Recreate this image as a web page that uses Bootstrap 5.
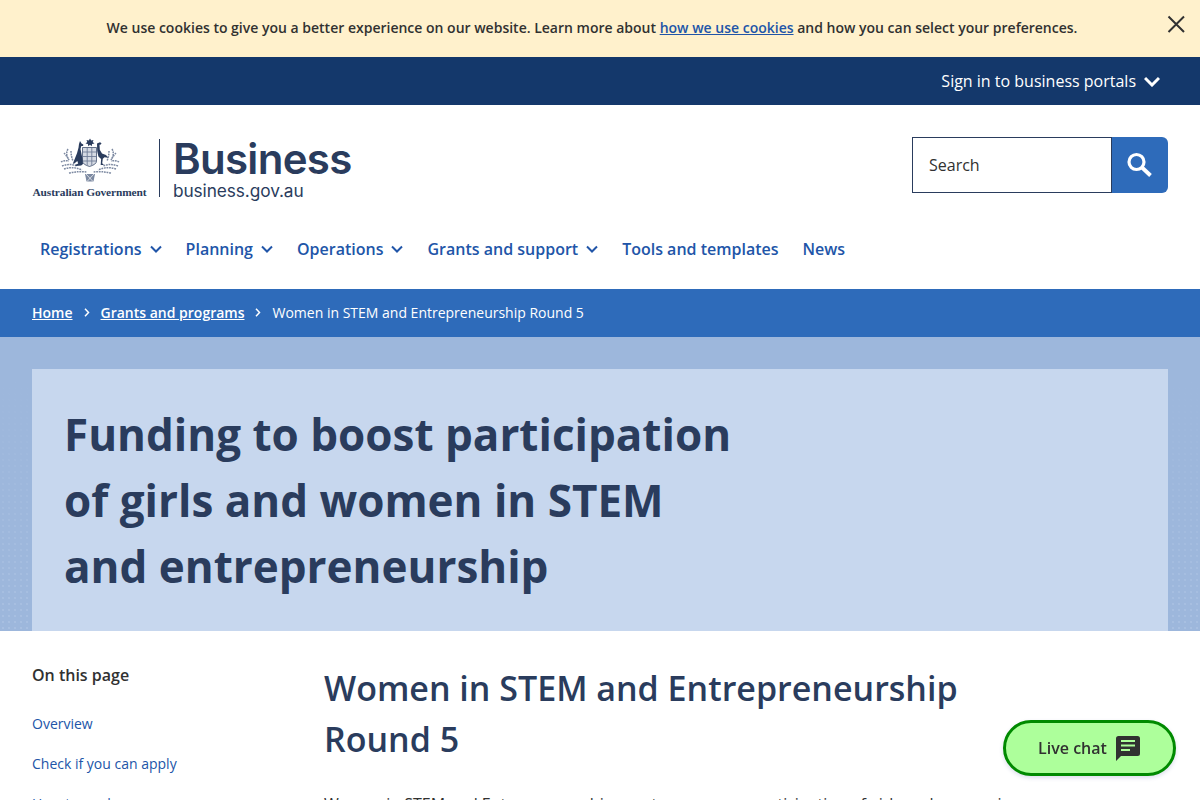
<!DOCTYPE html>
<html lang="en">
<head>
<meta charset="utf-8">
<title>Women in STEM and Entrepreneurship Round 5</title>
<link href="https://cdn.jsdelivr.net/npm/bootstrap@5.3.0/dist/css/bootstrap.min.css" rel="stylesheet">
<style>
html,body{height:800px;overflow:hidden}
body{font-family:"Open Sans",sans-serif;color:#313131;font-size:16px;background:#fff}
a{color:#2155a8}
.cookie-bar{height:57px;background:#fff1cc;font-size:14px;font-weight:600;color:#313131;position:relative;padding:0 16px 2px 0}
.cookie-bar a{color:#2155a8;font-weight:600}
.cookie-close{position:absolute;right:14px;top:14px;width:20px;height:20px;line-height:0}
.portal-bar{height:48px;background:#14386b;color:#fff;padding-right:40px}
.portal-bar span{margin-right:8px}
.head-row{padding:32px 32px 0;height:112px}
.logo-box{width:321px;height:62px;margin-top:2px}
.crest-col{width:115px;margin-top:-1px}
.gov-name{font-family:"Liberation Serif",serif;font-weight:700;font-size:11.4px;line-height:13px;color:#2a3c5d;white-space:nowrap;letter-spacing:-.1px;margin-bottom:2px}
.logo-rule{width:1px;height:58px;background:#2a3c5d;margin:0 13px 0 12px}
.brand-big{font-family:Inter,sans-serif;font-weight:600;font-size:42px;line-height:40px;letter-spacing:-.7px;color:#2a3c5d}
.brand-small{font-family:Inter,sans-serif;font-size:17.300px;line-height:22px;color:#2a3c5d;letter-spacing:-.1px;padding-top:1px}
.search-input{width:200px;height:56px;border:1px solid #2a3c5d;padding:0 16px;line-height:54px;color:#313131}
.search-btn{width:56px;height:56px;background:#2e6bba;border-radius:0 6px 6px 0}
.main-nav{height:72px;padding:0 40px 8px;gap:24px;font-weight:600;color:#2155a8}
.main-nav a{text-decoration:none;color:#2155a8;line-height:24px;white-space:nowrap}
.main-nav svg{margin-left:8px}
.crumb-bar{height:48px;background:#2e6bba;color:#fff;font-size:14px;padding:0 32px 2px}
.crumb-bar a{color:#fff;font-weight:600}
.crumb-bar svg{margin:0 11px}
.hero-band{height:294px;padding:32px 32px 0;background-color:#9db7dc;background-image:linear-gradient(to bottom,#9db7dc 15%,rgba(157,183,220,.35)),radial-gradient(circle,#aec4e4 1px,transparent 1.300px);background-size:100% 100%,6px 6px}
.hero-panel{height:262px;background:#c7d7ee;padding:32px}
.hero-title{font-size:44px;font-weight:700;line-height:66px;color:#2a3c5d;margin:0;max-width:680px}
.page-body{padding:0 32px}
.toc-col{width:292px;flex:none;padding-top:32px}
.toc-head{font-weight:600;line-height:24px;margin-bottom:27px;color:#313131}
.toc-link{display:block;font-size:14px;line-height:20px;margin-bottom:20px;color:#2155a8;text-decoration:none}
.main-col{width:680px;padding-top:32px}
.main-title{font-size:34px;font-weight:600;line-height:51px;color:#2a3c5d;margin:0 0 27px}
.main-copy{font-size:16px;line-height:24px;margin:0;white-space:nowrap}
.chat-btn{position:fixed;left:1003px;top:720px;width:173px;height:56px;background:#adff9b;border:3px solid #008a00;border-radius:28px;color:#313131;font-weight:600;box-shadow:0 2px 4px rgba(80,90,160,.2);gap:8px}
</style>
</head>
<body>
<div class="cookie-bar d-flex align-items-center justify-content-center">
  <div>We use cookies to give you a better experience on our website. Learn more about <a href="#">how we use cookies</a> and how you can select your preferences.</div>
  <div class="cookie-close"><svg width="20" height="20" viewBox="0 0 20 20"><path d="M2.500 2.500l15.500 15.500M18 2.500L2.500 18" stroke="#313131" stroke-width="2" fill="none"/></svg></div>
</div>
<div class="portal-bar d-flex align-items-center justify-content-end">
  <span>Sign in to business portals</span>
  <svg width="16" height="11" viewBox="0 0 16 11"><path d="M1 2l7 7 7-7" stroke="#fff" stroke-width="3" fill="none"/></svg>
</div>
<header>
  <div class="head-row d-flex justify-content-between">
    <div class="logo-box d-flex">
      <div class="crest-col d-flex flex-column align-items-center justify-content-end">
        <svg width="60" height="44" viewBox="0 0 60 44">
          <g stroke="#7c89a1" stroke-width="1.500" fill="none" stroke-dasharray="1.800 .8">
            <path d="M1 24q3-2 8-1M2 28q8-3 15 0M4 31q9-3 18 1M9 35q10-2 18-1"/>
            <path d="M59 24q-3-2-8-1M58 28q-8-3-15 0M56 31q-9-3-18 1M51 35q-10-2-18-1"/>
            <path d="M8 11q-3 5 1 11M4 15q3 3 5 7M11 13q0 5 2 10M52 11q3 5-1 11M56 15q-3 3-5 7M49 13q0 5-2 10"/>
          </g>
          <path d="M30 .5l1.200 2 2.300-.6-.8 2.200 1.800 1.500-2.400.4-.4 2.200-1.700-1.500-1.700 1.500-.4-2.200-2.400-.4 1.800-1.500-.8-2.200 2.300.6z" fill="#2a3c5d"/>
          <path d="M22.500 9.500h14v13.500q0 3.500-7 5.500q-7-2-7-5.500z" fill="#d5dae3" stroke="#2a3c5d" stroke-width=".7"/>
          <path d="M23 14h13M23 18.500h13M23 23h13M27.200 10v17M31.800 10v17" stroke="#6f7d97" stroke-width=".9" fill="none"/>
          <path d="M20 3l1.500 2.500 1.800 1-.2 1.500-1.800 0-.8 3 .8 4 1.200 6 .5 5-1.800 1.500-5 .5-1.200-1 3.200-1.600-.9-2.400-3 2.500-1.500.2 1.800-4.500 2.400-6 1.500-5.500.5-3.800z" fill="#2a3c5d"/>
          <path d="M37 5.500l3-1.200 1.500 1-.7 1.200-1.300.3.300 5 2.200 3.700 4 1.600 2.300 2.600-3.800-.4-1.700 1.500-.6 4.500 1.800 1.800-3.300 0 .4-6-2.700-2.500-1.200-5.500z" fill="#2a3c5d"/>
          <path d="M25 36h10l-1.500 7.500h-7z" fill="#7c89a1"/>
          <path d="M26 36l7 7.500M34 36l-7 7.500" stroke="#fff" stroke-width=".7"/>
        </svg>
        <div class="gov-name mt-1">Australian Government</div>
      </div>
      <div class="logo-rule"></div>
      <div>
        <div class="brand-big">Business</div>
        <div class="brand-small">business.gov.au</div>
      </div>
    </div>
    <div class="d-flex">
      <div class="search-input">Search</div>
      <div class="search-btn d-flex align-items-center justify-content-center">
        <svg width="26" height="26" viewBox="0 0 26 26"><circle cx="9.500" cy="10" r="7.500" stroke="#fff" stroke-width="3.200" fill="none"/><path d="M15 15.500l8.500 8" stroke="#fff" stroke-width="3.800" fill="none"/></svg>
      </div>
    </div>
  </div>
  <nav class="main-nav d-flex align-items-center">
    <a class="d-inline-flex align-items-center" href="#">Registrations<svg width="12" height="8" viewBox="0 0 12 8"><path d="M1 1.500l5 5 5-5" stroke="#2155a8" stroke-width="2" fill="none"/></svg></a>
    <a class="d-inline-flex align-items-center" href="#">Planning<svg width="12" height="8" viewBox="0 0 12 8"><path d="M1 1.500l5 5 5-5" stroke="#2155a8" stroke-width="2" fill="none"/></svg></a>
    <a class="d-inline-flex align-items-center" href="#">Operations<svg width="12" height="8" viewBox="0 0 12 8"><path d="M1 1.500l5 5 5-5" stroke="#2155a8" stroke-width="2" fill="none"/></svg></a>
    <a class="d-inline-flex align-items-center" href="#">Grants and support<svg width="12" height="8" viewBox="0 0 12 8"><path d="M1 1.500l5 5 5-5" stroke="#2155a8" stroke-width="2" fill="none"/></svg></a>
    <a href="#">Tools and templates</a>
    <a href="#">News</a>
  </nav>
</header>
<div class="crumb-bar d-flex align-items-center">
  <a href="#">Home</a>
  <svg width="6" height="9" viewBox="0 0 6 9"><path d="M1 .8l3.500 3.700L1 8.200" stroke="#fff" stroke-width="1.500" fill="none"/></svg>
  <a href="#">Grants and programs</a>
  <svg width="6" height="9" viewBox="0 0 6 9"><path d="M1 .8l3.500 3.700L1 8.200" stroke="#fff" stroke-width="1.500" fill="none"/></svg>
  <span>Women in STEM and Entrepreneurship Round 5</span>
</div>
<div class="hero-band">
  <div class="hero-panel">
    <h1 class="hero-title">Funding to boost participation of girls and women in STEM and entrepreneurship</h1>
  </div>
</div>
<div class="page-body d-flex">
  <aside class="toc-col">
    <div class="toc-head">On this page</div>
    <a class="toc-link" href="#">Overview</a>
    <a class="toc-link" href="#">Check if you can apply</a>
    <a class="toc-link" href="#">How to apply</a>
  </aside>
  <main class="main-col">
    <h2 class="main-title">Women in STEM and Entrepreneurship Round 5</h2>
    <p class="main-copy">Women in STEM and Entrepreneurship grants encourage participation of girls and women in</p>
  </main>
</div>
<div class="chat-btn d-flex align-items-center justify-content-center">
  <span>Live chat</span>
  <svg width="26" height="26" viewBox="0 0 26 26"><path d="M3.500 1h19A2.500 2.500 0 0 1 25 3.500v15a2.500 2.500 0 0 1-2.500 2.500H6l-5 5V3.500A2.500 2.500 0 0 1 3.500 1z" fill="#313131"/><path d="M6 6h14M6 10.500h14M6 15h9" stroke="#adff9b" stroke-width="2.200" fill="none"/></svg>
</div>
<script src="https://cdn.jsdelivr.net/npm/bootstrap@5.3.0/dist/js/bootstrap.bundle.min.js"></script>
</body>
</html>
